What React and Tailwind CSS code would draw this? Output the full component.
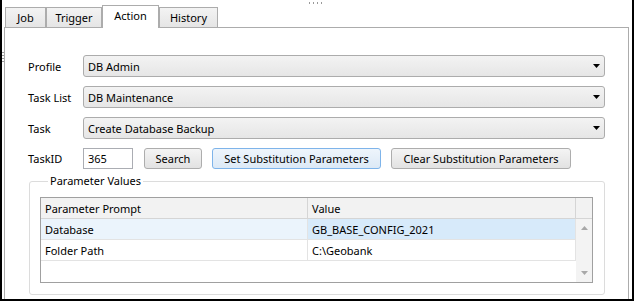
import React from 'react';

const tabs = [
  { name: 'Job', width: 'w-[41px]' },
  { name: 'Trigger', width: 'w-[56px]' },
  { name: 'Action', width: 'w-[57px]', active: true },
  { name: 'History', width: 'w-[59px]' },
];

const combos = [
  { label: 'Profile', value: 'DB Admin' },
  { label: 'Task List', value: 'DB Maintenance' },
  { label: 'Task', value: 'Create Database Backup' },
];

const params = [
  { prompt: 'Database', value: 'GB_BASE_CONFIG_2021', selected: true },
  { prompt: 'Folder Path', value: 'C:\\Geobank' },
];

const Arrow = ({ up = false, className = '' }) => (
  <svg width="7" height="4" viewBox="0 0 7 4" className={className}>
    {up ? <path d="M0 4 L3.5 0 L7 4 Z" /> : <path d="M0 0 L7 0 L3.5 4 Z" />}
  </svg>
);

const Combo = ({ value }) => (
  <div className="flex-1 h-[22px] rounded-[3px] border border-[#acacac] bg-linear-to-b from-[#f3f3f3] to-[#e6e6e6] flex items-center justify-between pl-[4px] pr-[4px]">
    <span>{value}</span>
    <Arrow className="fill-black" />
  </div>
);

const Button = ({ children, width, focused = false }) => (
  <div
    className={`${width} h-[21px] rounded-[3px] border flex items-center justify-center ${
      focused
        ? 'border-[#7eb4ea] bg-linear-to-b from-[#eef5fc] to-[#dce9f6]'
        : 'border-[#adadad] bg-linear-to-b from-[#f4f4f4] to-[#e2e2e2]'
    }`}
  >
    {children}
  </div>
);

export default function App() {
  return (
    <div className="relative w-[634px] h-[301px] overflow-hidden bg-white font-['Noto_Sans',sans-serif] text-[11px] leading-[15px] text-black">
      {/* splitter grips */}
      <div className="absolute top-[2px] left-[309px] flex gap-[3px]">
        {[0, 1, 2, 3].map((i) => (
          <span key={i} className="w-px h-[2px] bg-[#9a9a9a]" />
        ))}
      </div>
      <div className="absolute top-[52px] left-[2px] flex flex-col gap-[2px]">
        {[0, 1, 2, 3].map((i) => (
          <span key={i} className="w-[2px] h-px bg-[#9a9a9a]" />
        ))}
      </div>

      <div className="h-[301px] border-l-2 border-r-2 border-b-2 border-black flex flex-col">
        {/* tab strip */}
        <div className="h-[27px] shrink-0 flex items-end pl-[3px]">
          {tabs.map((tab) =>
            tab.active ? (
              <div
                key={tab.name}
                className={`${tab.width} h-[23px] -mb-px relative z-10 bg-white border border-b-0 border-[#acacac] flex justify-center pt-[2px]`}
              >
                {tab.name}
              </div>
            ) : (
              <div
                key={tab.name}
                className={`${tab.width} h-[20px] border border-b-0 border-[#acacac] bg-linear-to-b from-[#f3f3f3] to-[#e5e5e5] flex items-center justify-center`}
              >
                {tab.name}
              </div>
            )
          )}
        </div>

        {/* tab page */}
        <div className="flex-1 ml-[2px] mr-[3px] border border-b-0 border-[#acacac] pt-[27px] px-[23px]">
          <div className="flex flex-col gap-[9px]">
            {combos.map((c) => (
              <div key={c.label} className="flex items-center h-[22px]">
                <span className="w-[55px]">{c.label}</span>
                <Combo value={c.value} />
              </div>
            ))}
            <div className="flex items-center h-[21px]">
              <span className="w-[55px]">TaskID</span>
              <div className="w-[50px] h-[21px] border border-[#abadb3] bg-white flex items-center pl-[4px]">
                365
              </div>
              <div className="ml-[11px] flex gap-[10px]">
                <Button width="w-[58px]">Search</Button>
                <Button width="w-[169px]" focused>
                  Set Substitution Parameters
                </Button>
                <Button width="w-[180px]">Clear Substitution Parameters</Button>
              </div>
            </div>
          </div>

          <fieldset className="mt-[4px] ml-px w-[576px] border border-[#dcdcdc] rounded-[3px] pl-[10px] pr-[11px] pb-[11px]">
            <legend className="ml-[8px] px-[2px] leading-[16px]">Parameter Values</legend>
            <div className="mt-[8px] h-[86px] border border-[#a0a0a0] flex flex-col bg-white">
              <div className="h-[21px] shrink-0 flex border-b border-[#d5d5d5] bg-[#f2f2f2]">
                <div className="w-[267px] border-r border-[#d5d5d5] pl-[4px] flex items-center">
                  Parameter Prompt
                </div>
                <div className="w-[268px] border-r border-[#d5d5d5] pl-[4px] flex items-center">Value</div>
                <div className="flex-1" />
              </div>
              <div className="flex-1 flex">
                <div className="flex-1 flex flex-col">
                  {params.map((p) => (
                    <div key={p.prompt} className="h-[21px] flex border-b border-[#e3e3e3]">
                      <div
                        className={`w-[267px] border-r border-[#e3e3e3] pl-[4px] flex items-center ${
                          p.selected ? 'bg-[#ebf4fc]' : ''
                        }`}
                      >
                        {p.prompt}
                      </div>
                      <div
                        className={`w-[268px] border-r border-[#e3e3e3] pl-[4px] flex items-center ${
                          p.selected ? 'bg-[#d7eafa]' : ''
                        }`}
                      >
                        {p.value}
                      </div>
                    </div>
                  ))}
                </div>
                <div className="w-[16px] bg-[#f3f3f3] flex flex-col items-center justify-between py-[7px]">
                  <Arrow up className="fill-[#a8a8a8]" />
                  <Arrow className="fill-[#a8a8a8]" />
                </div>
              </div>
            </div>
          </fieldset>
        </div>
      </div>
    </div>
  );
}
